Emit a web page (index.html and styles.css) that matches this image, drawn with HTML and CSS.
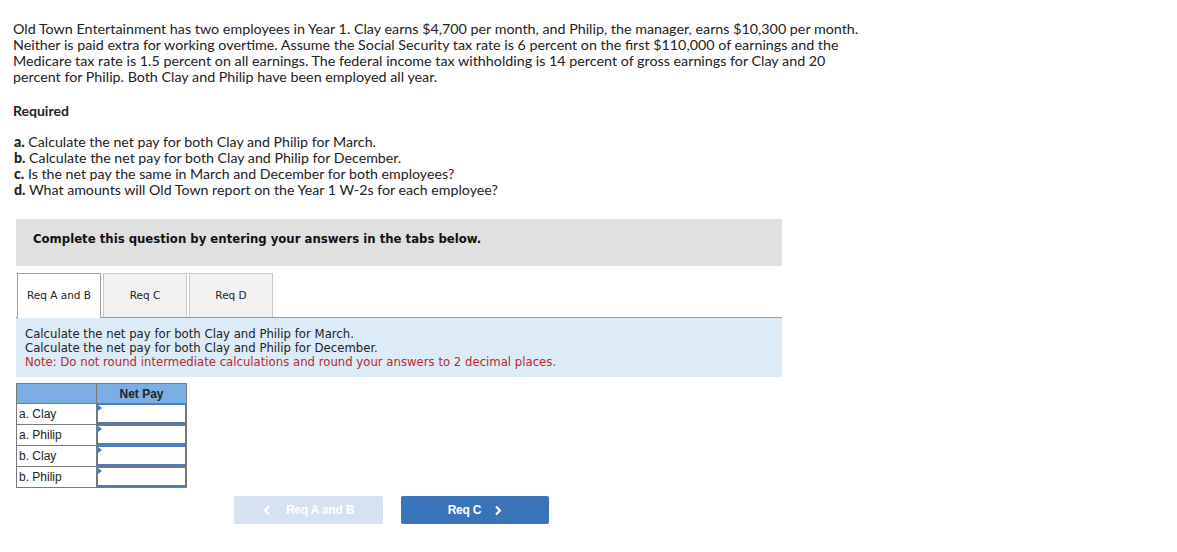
FILE: index.html
```html
<!DOCTYPE html>
<html>
<head>
<meta charset="utf-8">
<link rel="stylesheet" href="styles.css">
</head>
<body>
<div class="page">
  <p class="intro">Old Town Entertainment has two employees in Year 1. Clay earns $4,700 per month, and Philip, the manager, earns $10,300 per month.<br>Neither is paid extra for working overtime. Assume the Social Security tax rate is 6 percent on the first $110,000 of earnings and the<br>Medicare tax rate is 1.5 percent on all earnings. The federal income tax withholding is 14 percent of gross earnings for Clay and 20<br>percent for Philip. Both Clay and Philip have been employed all year.</p>
  <p class="req-title">Required</p>
  <ul class="req-list">
    <li><b>a.</b> Calculate the net pay for both Clay and Philip for March.</li>
    <li><b>b.</b> Calculate the net pay for both Clay and Philip for December.</li>
    <li><b>c.</b> Is the net pay the same in March and December for both employees?</li>
    <li><b>d.</b> What amounts will Old Town report on the Year 1 W-2s for each employee?</li>
  </ul>

  <div class="question">
    <div class="banner">Complete this question by entering your answers in the tabs below.</div>
    <div class="tabs">
      <div class="tab active">Req A and B</div>
      <div class="tab">Req C</div>
      <div class="tab">Req D</div>
    </div>
    <div class="instructions">
      <div>Calculate the net pay for both Clay and Philip for March.</div>
      <div>Calculate the net pay for both Clay and Philip for December.</div>
      <div class="note">Note: Do not round intermediate calculations and round your answers to 2 decimal places.</div>
    </div>
    <table class="grid">
      <tr><th class="blank"></th><th>Net Pay</th></tr>
      <tr><td class="label">a. Clay</td><td class="input"></td></tr>
      <tr><td class="label">a. Philip</td><td class="input"></td></tr>
      <tr><td class="label">b. Clay</td><td class="input"></td></tr>
      <tr><td class="label">b. Philip</td><td class="input"></td></tr>
    </table>
    <div class="nav">
      <div class="btn prev"><svg class="chev left" width="8" height="11" viewBox="0 0 8 11"><path d="M6 1.5 L2 5.5 L6 9.5" fill="none" stroke="#fff" stroke-width="2.2"/></svg>Req A and B</div>
      <div class="btn next">Req C<svg class="chev right" width="8" height="11" viewBox="0 0 8 11"><path d="M2 1.5 L6 5.5 L2 9.5" fill="none" stroke="#fff" stroke-width="2.2"/></svg></div>
    </div>
  </div>
</div>
</body>
</html>
```
FILE: styles.css
```css
html, body {
  margin: 0;
  padding: 0;
  background: #fff;
}
.page {
  padding: 21px 0 0 13px;
  width: 900px;
}
.intro {
  margin: 0;
  font-family: "Lato", "Open Sans", sans-serif;
  font-size: 14.3px;
  line-height: 16px;
  color: #222;
  white-space: nowrap;
}
.req-title {
  margin: 18px 0 0 0;
  font-family: "Lato", sans-serif;
  font-weight: bold;
  font-size: 14px;
  line-height: 16px;
  color: #222;
}
.req-list {
  list-style: none;
  margin: 15px 0 0 0;
  padding: 0 0 0 1px;
  font-family: "Lato", sans-serif;
  font-size: 14.2px;
  line-height: 16px;
  color: #222;
}
.req-list b { font-weight: 900; }
.question {
  margin: 21px 0 0 3px;
  width: 766px;
}
.banner {
  background: #e0e0e0;
  height: 47px;
  box-sizing: border-box;
  padding: 12px 0 0 17px;
  font-family: "DejaVu Sans Condensed", "DejaVu Sans", sans-serif;
  font-weight: bold;
  font-size: 13px;
  color: #111;
}
.tabs {
  display: flex;
  gap: 2px;
  margin-top: 7px;
  padding-left: 1px;
  height: 44px;
}
.tab {
  width: 84px;
  height: 44px;
  box-sizing: border-box;
  border: 1px solid #c8c8c8;
  border-bottom: none;
  background: #f2f2f2;
  display: flex;
  align-items: center;
  justify-content: center;
  font-family: "DejaVu Sans", sans-serif;
  font-size: 10.5px;
  color: #222;
  padding-bottom: 2px;
}
.tab.active {
  background: #fff;
  border-color: #a0a0a0;
  height: 45px;
  position: relative;
  z-index: 1;
}
.instructions {
  background: #dbebf8;
  border-top: 1px solid #999;
  padding: 9px 0 8px 9px;
  font-family: "DejaVu Sans Condensed", "DejaVu Sans", sans-serif;
  font-size: 13px;
  line-height: 14px;
  color: #222;
}
.note { color: #c0262d; }
.grid {
  margin-top: 6px;
  border-collapse: collapse;
  font-family: "Liberation Sans", Arial, sans-serif;
  font-size: 12px;
  color: #222;
}
.grid th {
  background: #7aaee4;
  border: 1px solid #7a7a7a;
  height: 19px;
  width: 89px;
  font-weight: bold;
  padding: 0;
  text-align: center;
}
.grid th.blank { width: 79px; }
.grid td {
  border: 1px solid #7a7a7a;
  height: 20px;
  padding: 0;
}
.grid td.label {
  padding-left: 2px;
}
.grid td.input {
  position: relative;
  box-shadow: inset 0 0 0 1px #4a7bbf, inset 0 -2px 0 0 #4a7bbf;
  background: #fff;
}
.grid td.input::before {
  content: "";
  position: absolute;
  left: 1px;
  top: 1px;
  border-left: 4px solid #3a80d0;
  border-top: 3px solid transparent;
  border-bottom: 3px solid transparent;
}
.nav {
  display: flex;
  gap: 18px;
  margin: 8px 0 0 218px;
}
.btn {
  width: 149px;
  height: 28px;
  border-radius: 2px;
  display: flex;
  align-items: center;
  justify-content: center;
  font-family: "Liberation Sans", Arial, sans-serif;
  font-weight: bold;
  font-size: 12px;
  letter-spacing: -0.2px;
  color: #fff;
}
.btn.prev { background: #d6e2f1; }
.btn.next { background: #3a74b8; width: 148px; }
.chev.left { margin-right: 15px; }
.chev.right { margin-left: 13px; }
```
